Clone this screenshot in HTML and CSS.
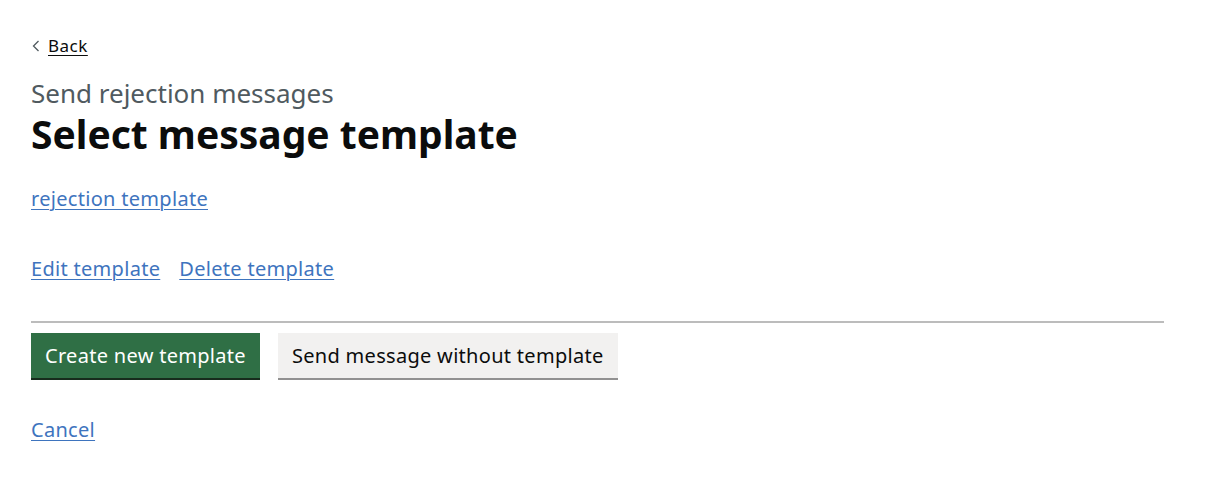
FILE: index.html
```html
<!DOCTYPE html>
<html lang="en">
<head>
<meta charset="utf-8">
<title>Select message template</title>
<link rel="stylesheet" href="styles.css">
</head>
<body>
<div class="page">
  <a class="back-link" href="#"><svg class="chev" width="8" height="12" viewBox="0 0 8 12"><path d="M6.5 1 L1.5 6 L6.5 11" fill="none" stroke="#505a5f" stroke-width="1.3"/></svg><span class="back-text">Back</span></a>
  <main class="main">
    <span class="caption">Send rejection messages</span>
    <h1 class="heading">Select message template</h1>
    <p class="template-link"><a class="link" href="#">rejection template</a></p>
    <p class="actions"><a class="link" href="#">Edit template</a><a class="link" href="#">Delete template</a></p>
    <hr class="divider">
    <div class="button-group">
      <button class="btn btn-primary">Create new template</button>
      <button class="btn btn-secondary">Send message without template</button>
    </div>
    <p class="cancel"><a class="link" href="#">Cancel</a></p>
  </main>
</div>
</body>
</html>
```
FILE: styles.css
```css
html, body {
  margin: 0;
  padding: 0;
  background: #ffffff;
}
body {
  font-family: "Noto Sans", "Liberation Sans", Arial, sans-serif;
  color: #0b0c0c;
}
.page {
  padding: 33px 42px 0 31px;
}
.back-link {
  display: inline-flex;
  align-items: center;
  gap: 8px;
  font-size: 17px;
  line-height: 26px;
  letter-spacing: 0.5px;
  color: #0b0c0c;
  text-decoration: none;
}
.chev { margin-left: 1px; }
.back-text {
  text-decoration: underline;
  text-underline-offset: 3px;
  text-decoration-thickness: 1px;
}
.main {
  display: flex;
  flex-direction: column;
  align-items: flex-start;
  padding-top: 18px;
}
.caption {
  font-size: 26px;
  line-height: 32px;
  color: #505a5f;
}
.heading {
  margin: 0;
  font-size: 39px;
  line-height: 50px;
  font-weight: 700;
}
.link {
  color: #3e74be;
  text-decoration: underline;
  text-underline-offset: 3px;
  text-decoration-thickness: 1px;
}
.template-link,
.actions,
.cancel {
  font-size: 20px;
  line-height: 26px;
  letter-spacing: 0.3px;
}
.template-link {
  margin: 27px 0 0;
}
.actions {
  margin: 44px 0 0;
  display: flex;
  gap: 19px;
}
.divider {
  align-self: stretch;
  margin: 39px 0 0;
  border: 0;
  height: 2px;
  background: #bcbcbc;
}
.button-group {
  display: flex;
  gap: 18px;
  margin-top: 10px;
}
.btn {
  font-family: inherit;
  font-size: 20px;
  line-height: 22px;
  letter-spacing: 0.3px;
  border: 0;
  border-radius: 0;
  padding: 11px 14px;
  height: 45px;
  cursor: pointer;
}
.btn-primary {
  background: #2f6f45;
  color: #ffffff;
  box-shadow: 0 2px 0 #172c1d;
}
.btn-secondary {
  background: #f2f1f0;
  color: #0b0c0c;
  box-shadow: 0 2px 0 #929191;
}
.cancel {
  margin: 39px 0 0;
}
```
